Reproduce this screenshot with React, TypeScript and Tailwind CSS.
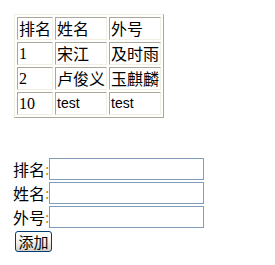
export default function App() {
  const rows: string[][] = [
    ["排名", "姓名", "外号"],
    ["1", "宋江", "及时雨"],
    ["2", "卢俊义", "玉麒麟"],
    ["10", "test", "test"],
  ];
  const cellFont = (t: string) => {
    if (/^[0-9]+$/.test(t)) return "font-['Liberation_Serif',serif] text-[16px]";
    if (/^[a-z]+$/.test(t)) return "font-['Liberation_Sans',sans-serif] text-[14px]";
    return "font-['Noto_Sans_CJK_SC',sans-serif] text-[16px]";
  };
  const labels = ["排名", "姓名", "外号"];
  return (
    <div className="bg-white w-[275px] h-[265px] pl-[14px] pt-[14px] text-black">
      <table className="border-separate border-spacing-[2px] border border-t-[#f1efe2] border-l-[#f1efe2] border-r-[#aca899] border-b-[#aca899]">
        <tbody>
          {rows.map((r, i) => (
            <tr key={i}>
              {r.map((c, j) => (
                <td
                  key={j}
                  className={`p-px h-[23px] leading-[19px] whitespace-nowrap text-left align-middle border border-t-[#aca899] border-l-[#aca899] border-r-[#f1efe2] border-b-[#f1efe2] ${cellFont(c)}`}
                >
                  {c}
                </td>
              ))}
            </tr>
          ))}
        </tbody>
      </table>
      <div className="mt-[39px] flex flex-col -ml-[1px]">
        {labels.map((l) => (
          <div key={l} className="flex items-center h-[24px]">
            <span className="font-['Noto_Sans_CJK_SC',sans-serif] text-[16px] leading-[19px] w-[32px] whitespace-nowrap">{l}</span>
            <span className="font-['Liberation_Serif',serif] text-[16px] leading-[19px] w-[4px] text-[#c8841c]">:</span>
            <input className="w-[155px] h-[22px] border border-[#7f9db9] bg-white outline-none" />
          </div>
        ))}
        <div className="pt-[2px] pl-[2px]">
          <button className="w-[37px] h-[21px] border border-[#003c74] rounded-[3px] bg-gradient-to-b from-white via-[#f4f3ee] to-[#d6d0c5] font-['Noto_Sans_CJK_SC',sans-serif] text-[15px] leading-[17px] flex items-center justify-center">
            添加
          </button>
        </div>
      </div>
    </div>
  );
}
